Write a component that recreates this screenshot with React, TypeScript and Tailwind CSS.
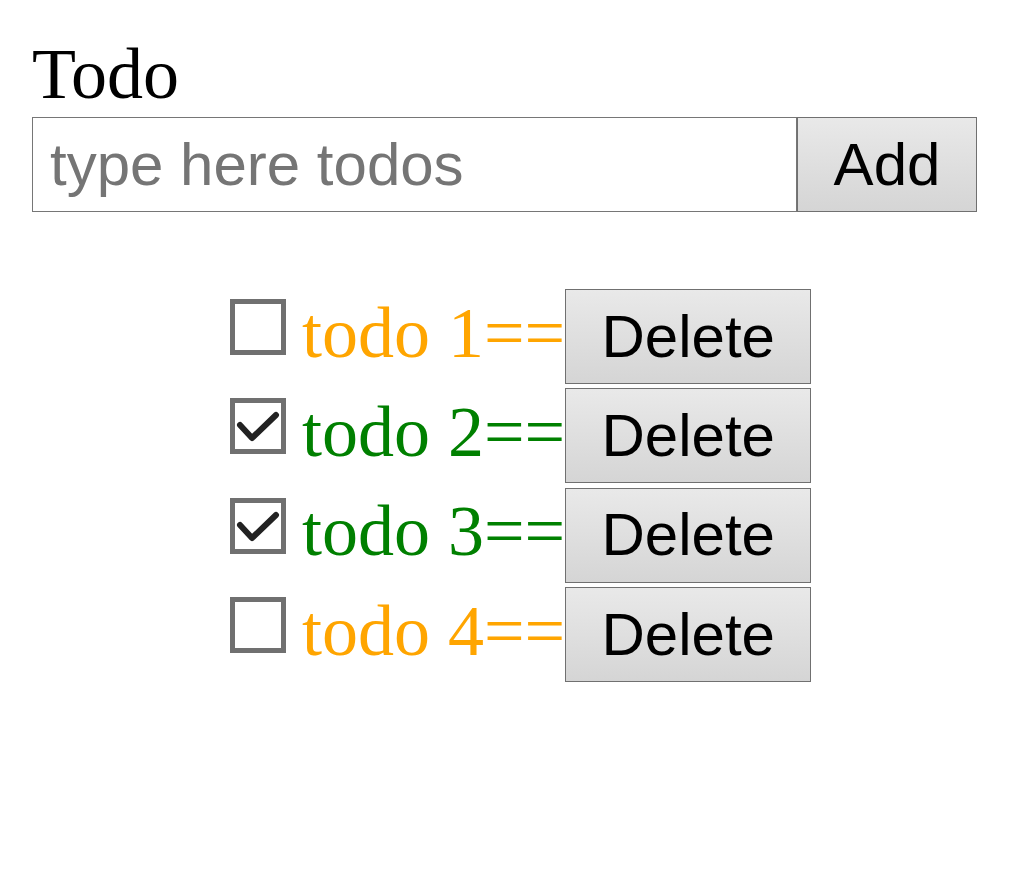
type Todo = { id: number; text: string; done: boolean };

const todos: Todo[] = [
  { id: 1, text: "todo 1", done: false },
  { id: 2, text: "todo 2", done: true },
  { id: 3, text: "todo 3", done: true },
  { id: 4, text: "todo 4", done: false },
];

function Check({ on }: { on: boolean }) {
  return (
    <div className="mt-[10px] h-[56px] w-[56px] shrink-0 self-start border-[5px] border-[#707070] bg-white">
      {on && (
        <svg viewBox="0 0 46 46" className="h-full w-full">
          <polyline
            points="5,22 17,35 41,12"
            fill="none"
            stroke="#222"
            strokeWidth="6"
            strokeLinecap="round"
            strokeLinejoin="round"
          />
        </svg>
      )}
    </div>
  );
}

export default function App() {
  return (
    <div className="min-h-screen bg-white pl-[32px] pt-[38px] text-black">
      <div className="font-['Liberation_Serif',serif] text-[72px] leading-none">Todo</div>

      {/* 입력줄 */}
      <div className="mt-[7px] flex h-[95px] w-[945px]">
        <input
          className="h-full w-[765px] border border-[#767676] bg-white px-[17px] font-['Liberation_Sans',Arial,sans-serif] text-[60px] outline-none placeholder:text-[#757575]"
          placeholder="type here todos"
        />
        <button className="h-full w-[180px] border border-[#707070] bg-gradient-to-b from-[#e9e9e9] to-[#d5d5d5] font-['Liberation_Sans',Arial,sans-serif] text-[60px]">
          Add
        </button>
      </div>

      {/* 목록 */}
      <div className="ml-[198px] mt-[77px] flex flex-col gap-[4.4px]">
        {todos.map((t) => (
          <div key={t.id} className="flex h-[95px] items-baseline">
            <Check on={t.done} />
            <span
              className={
                "ml-[16px] font-['Liberation_Serif',serif] text-[72px] leading-none " +
                (t.done ? "text-[#008000]" : "text-[#ffa500]")
              }
            >
              {t.text}==
            </span>
            <button className="h-[95px] w-[246px] border border-[#707070] bg-gradient-to-b from-[#e9e9e9] to-[#d5d5d5] font-['Liberation_Sans',Arial,sans-serif] text-[60px]">
              Delete
            </button>
          </div>
        ))}
      </div>
    </div>
  );
}
